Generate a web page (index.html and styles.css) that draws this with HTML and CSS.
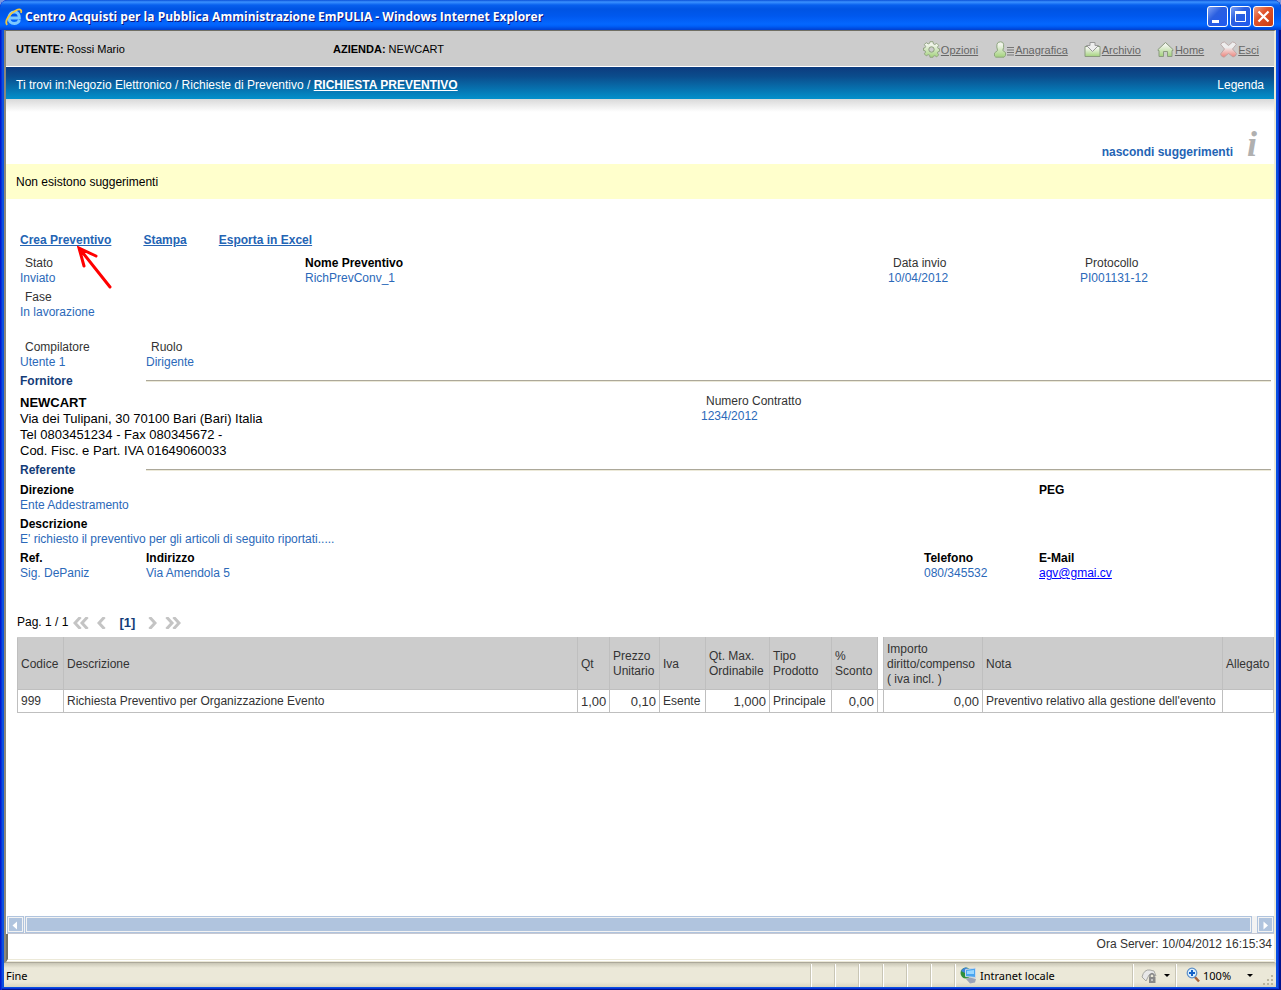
FILE: index.html
```html
<!DOCTYPE html>
<html lang="it">
<head>
<meta charset="utf-8">
<title>Centro Acquisti per la Pubblica Amministrazione EmPULIA</title>
<link rel="stylesheet" href="styles.css">
</head>
<body>
<div class="window">
  <header class="titlebar">
    <svg class="ie-logo" viewBox="0 0 18 18" aria-hidden="true">
      <path d="M14.500 12C13.500 14.500 11.500 15.500 9.300 15.500 6 15.500 3.900 13 3.900 9.900 3.900 6.600 6.200 4 9.400 4c3.200 0 5 2.400 4.900 5.900H5.500" fill="none" stroke="#7cc8ff" stroke-width="3"/>
      <path d="M2.200 16.800C-1 13.500 4.500 5.500 10.800 2.500 14.500.7 17.300 1.200 15.900 4.900" fill="none" stroke="#f3c63b" stroke-width="1.800"/>
    </svg>
    <h1 class="title">Centro Acquisti per la Pubblica Amministrazione EmPULIA - Windows Internet Explorer</h1>
    <div class="win-buttons">
      <button class="win-btn" type="button" aria-label="Riduci a icona"><svg viewBox="0 0 19 19"><path d="M4 13h7v3H4z" fill="#fff"/></svg></button>
      <button class="win-btn" type="button" aria-label="Ingrandisci"><svg viewBox="0 0 19 19"><path d="M4.500 5.500h10v9h-10z" fill="none" stroke="#fff"/><path d="M4 4h11v3H4z" fill="#fff"/></svg></button>
      <button class="win-btn win-close" type="button" aria-label="Chiudi"><svg viewBox="0 0 19 19"><path d="M4.500 4.500l10 10M14.500 4.500l-10 10" stroke="#fff" stroke-width="2.200"/></svg></button>
    </div>
  </header>

  <div class="viewport">
    <div class="userbar">
      <div class="user"><b>UTENTE:</b> Rossi Mario</div>
      <div class="company"><b>AZIENDA:</b> NEWCART</div>
      <nav class="menu">
        <a href="#opzioni"><svg class="ico" viewBox="0 0 17 17"><defs><linearGradient id="green" x1="0" y1="0" x2="0" y2="1"><stop offset=".2" stop-color="#f0f4ea"/><stop offset="1" stop-color="#a3d27c"/></linearGradient></defs><path d="M7 .7h3l.4 2.200 1.400.6L13.700 2.300l2 2-1.200 1.900.6 1.300 1.400.2v2.600l-1.500.4-.6 1.300 1.300 1.900-2 2-1.900-1.300-1.400.6L10 16.300H7l-.4-2.100-1.400-.6-1.900 1.300-2-2L2.600 11 2 9.700.5 9.500V7L2 6.800l.6-1.400-1.300-1.900 2-1.800 1.900 1.200 1.400-.6z" fill="url(#green)" stroke="#8fa07f" stroke-width=".9"/><circle cx="8.500" cy="8.500" r="2.700" fill="#ccc" stroke="#8fa07f"/></svg><span>Opzioni</span></a>
        <a href="#anagrafica"><svg class="ico ico-wide" viewBox="0 0 20 17"><path d="M3 3.200Q3.500.8 6.500.8 9.300.8 9.600 3.200V6.500L8.800 9.500l2.700 2v3l-1.500 1.700H1.800L.5 15V12L3.600 9.500 2.800 6z" fill="url(#green)" stroke="#8fa780"/><path d="M13 6.500h7M13 9h7M13 11.500h7M13 14h7" stroke="#777"/></svg><span>Anagrafica</span></a>
        <a href="#archivio"><svg class="ico" viewBox="0 0 17 17"><path d="M1 5.500h15v10H1z" fill="url(#green)" stroke="#8b9a80"/><path d="M6 1.500h5v3h3.500l-6 6-6-6H6z" fill="#eee" stroke="#999"/></svg><span>Archivio</span></a>
        <a href="#home"><svg class="ico" viewBox="0 0 17 17"><path d="M8.500 1.500l7.500 7v1h-1v6H10.500V10.500h-4v5H2v-6H1v-1z" fill="url(#green)" stroke="#8b9a80"/></svg><span>Home</span></a>
        <a href="#esci"><svg class="ico" viewBox="0 0 17 17"><defs><linearGradient id="red" x1="0" y1="0" x2="0" y2="1"><stop offset=".35" stop-color="#eee"/><stop offset="1" stop-color="#ee8078"/></linearGradient></defs><path d="M.8 3.500Q2 .8 4.500 1L8.500 4.500 12.500 1Q15 .8 16.200 3.500L12.500 8l4 4.500Q16 15.500 13 16L8.500 12.500 4 16.300Q1 15.800.5 13L4.500 8z" fill="url(#red)" stroke="#b5a09e" stroke-width=".8"/></svg><span>Esci</span></a>
      </nav>
    </div>

    <div class="crumbs">
      <div>Ti trovi in:Negozio Elettronico / Richieste di Preventivo / <a href="#richiesta">RICHIESTA PREVENTIVO</a></div>
      <a class="legend" href="#legenda">Legenda</a>
    </div>

    <div class="hints">
      <a href="#suggerimenti">nascondi suggerimenti</a>
      <span class="info" aria-hidden="true">i</span>
    </div>
    <p class="notice">Non esistono suggerimenti</p>

    <main class="doc">
      <div class="actions">
        <a href="#crea">Crea Preventivo<svg class="pointer" viewBox="0 0 36 45"><path d="M33 42L2 3M7 21L2 3l17 8" fill="none" stroke="#f00" stroke-width="3" stroke-linecap="round"/></svg></a>
        <a href="#stampa">Stampa</a>
        <a href="#excel">Esporta in Excel</a>
      </div>

      <dl class="row row-state">
        <div><dt>Stato</dt><dd>Inviato</dd></div>
        <div><dt class="strong">Nome Preventivo</dt><dd>RichPrevConv_1</dd></div>
        <div><dt>Data invio</dt><dd>10/04/2012</dd></div>
        <div><dt>Protocollo</dt><dd>PI001131-12</dd></div>
      </dl>
      <dl class="row row-phase">
        <div><dt>Fase</dt><dd>In lavorazione</dd></div>
      </dl>
      <dl class="row row-contact">
        <div><dt>Compilatore</dt><dd>Utente 1</dd></div>
        <div><dt>Ruolo</dt><dd>Dirigente</dd></div>
      </dl>

      <div class="section"><h2>Fornitore</h2><hr></div>
      <div class="supplier">
        <address><b>NEWCART</b><br>Via dei Tulipani, 30 70100 Bari (Bari) Italia<br>Tel 0803451234 - Fax 080345672 -<br>Cod. Fisc. e Part. IVA 01649060033</address>
        <dl class="contract"><dt>Numero Contratto</dt><dd>1234/2012</dd></dl>
      </div>

      <div class="section"><h2>Referente</h2><hr></div>
      <dl class="row row-contact row-first">
        <div class="span3"><dt class="strong">Direzione</dt><dd>Ente Addestramento</dd></div>
        <div><dt class="strong">PEG</dt></div>
      </dl>
      <dl class="row row-wide">
        <div><dt class="strong">Descrizione</dt><dd>E' richiesto il preventivo per gli articoli di seguito riportati.....</dd></div>
      </dl>
      <dl class="row row-contact">
        <div><dt class="strong">Ref.</dt><dd>Sig. DePaniz</dd></div>
        <div><dt class="strong">Indirizzo</dt><dd>Via Amendola 5</dd></div>
        <div><dt class="strong">Telefono</dt><dd>080/345532</dd></div>
        <div><dt class="strong">E-Mail</dt><dd><a class="mail" href="mailto:agv@gmai.cv">agv@gmai.cv</a></dd></div>
      </dl>
    </main>

    <nav class="pager" aria-label="Pagine">
      <span>Pag. 1 / 1</span>
      <svg class="chev" viewBox="0 0 16 12"><path d="M7.500 0L2 6l5.500 6M14.500 0L9 6l5.500 6"/></svg>
      <svg class="chev chev-one" viewBox="0 0 9 12"><path d="M7.500 0L2 6l5.500 6"/></svg>
      <b>[1]</b>
      <svg class="chev chev-one" viewBox="0 0 9 12"><path d="M1.500 0L7 6l-5.500 6"/></svg>
      <svg class="chev" viewBox="0 0 16 12"><path d="M1.500 0L7 6l-5.500 6M8.500 0L14 6l-5.500 6"/></svg>
    </nav>

    <div class="items-wrap">
    <table class="items">
      <colgroup><col class="w46"><col><col class="w32"><col class="w50"><col class="w46"><col class="w64"><col class="w62"><col class="w46"><col class="w6"><col class="w99"><col class="w240"><col class="w51"></colgroup>
      <thead>
        <tr><th>Codice</th><th>Descrizione</th><th>Qt</th><th>Prezzo<br>Unitario</th><th>Iva</th><th>Qt. Max.<br>Ordinabile</th><th>Tipo<br>Prodotto</th><th>%<br>Sconto</th><td class="gap"></td><th>Importo<br>diritto/compenso<br>( iva incl. )</th><th>Nota</th><th>Allegato</th></tr>
      </thead>
      <tbody>
        <tr><td>999</td><td>Richiesta Preventivo per Organizzazione Evento</td><td class="num">1,00</td><td class="num">0,10</td><td>Esente</td><td class="num">1,000</td><td>Principale</td><td class="num">0,00</td><td class="gap"></td><td class="num">0,00</td><td>Preventivo relativo alla gestione dell'evento</td><td></td></tr>
      </tbody>
    </table>
    </div>

    <div class="scrollbar">
      <button type="button" aria-label="Scorri a sinistra"><svg viewBox="0 0 14 14"><path d="M9 3.500v8L4.500 7.500z" fill="#fff"/></svg></button>
      <div class="thumb"></div>
      <button type="button" aria-label="Scorri a destra"><svg viewBox="0 0 14 14"><path d="M5.500 3.500v8L10 7.500z" fill="#fff"/></svg></button>
    </div>
    <div class="clock">Ora Server: 10/04/2012 16:15:34</div>
  </div>

  <footer class="status">
    <span class="state">Fine</span>
    <i class="cell"></i><i class="cell"></i><i class="cell"></i><i class="cell"></i><i class="cell"></i><i class="cell"></i>
    <div class="zone"><svg class="s-ico" viewBox="0 0 17 17"><circle cx="6" cy="6" r="5.500" fill="#2f8f3c"/><path d="M1 4Q4-1 8 1L5 6z" fill="#3c83d8"/><path d="M5.500 2.500l10-1.500v9.500l-10-1z" fill="#4aa5f0" stroke="#cfd8e6"/><path d="M7 4l7-1v4L7 7z" fill="#9ad7ff"/><path d="M6 12l4-1.500 6 1.500-1 3.500-5 1z" fill="#9ba3b8"/></svg>Intranet locale</div>
    <div class="lock"><svg class="s-ico" viewBox="0 0 17 17"><path d="M1 10Q3 2 9 3l4 1 2 5-4-2-3 1-3 6-2-2z" fill="#e8e8e8" stroke="#a7a7a2"/><path d="M9 10V8q2-3 4 0v2" fill="none" stroke="#888" stroke-width="1.500"/><path d="M8 10h6.500v6H8z" fill="#888"/><path d="M11 12v2" stroke="#fff"/></svg><i class="drop"></i></div>
    <button class="zoom" type="button"><svg class="s-ico" viewBox="0 0 17 17"><path d="M9 9l5 5.500" stroke="#a8643c" stroke-width="2.500"/><circle cx="7" cy="6" r="4.800" fill="#d9efff" stroke="#5d8fc8" stroke-width="1.200"/><path d="M7 3v6M4 6h6" stroke="#1462c8" stroke-width="2"/></svg><span>100%</span><i class="drop"></i></button>
    <svg class="grip" viewBox="0 0 12 12"><path d="M9 1h2v2H9zM5 5h2v2H5zM9 5h2v2H9zM1 9h2v2H1zM5 9h2v2H5zM9 9h2v2H9z" fill="#b9b5a0"/></svg>
  </footer>
</div>
</body>
</html>
```
FILE: styles.css
```css
* { box-sizing: border-box; }

body {
  margin: 0;
  background: #7b97e0;
  color: #333;
  font: 12px/15px "Liberation Sans", Arial, sans-serif;
}

h1, h2, p, dl, dd, hr { margin: 0; }
svg { display: block; flex: none; }
button { padding: 0; font: inherit; }

.window {
  display: flex;
  flex-direction: column;
  min-height: 100vh;
  padding: 0 5px 3px 4px;
  overflow: hidden;
  border-radius: 8px 8px 0 0;
  background: #0a50e0;
  box-shadow: inset 1px 0 #0019cf, inset 2px 0 #0831d9, inset -2px -1px #00138c, inset -3px -2px #0831d9;
}

/* Title bar */
.titlebar {
  display: flex;
  align-items: center;
  gap: 2px;
  height: 30px;
  margin: 0 -5px 0 -4px;
  padding: 3px 7px 0 5px;
  background: linear-gradient(#0a50d8 0, #3b92ff 2px, #0860ee 5px, #0054e3 9px, #0058ee 16px, #0467ff 24px, #0060fa 26px, #003fd0 30px);
}
.ie-logo { width: 18px; height: 18px; }
.title {
  flex: 1;
  color: #fff;
  font: bold 12px/18px "Open Sans", "Noto Sans", sans-serif;
  text-shadow: 1px 1px #0a1883;
  white-space: nowrap;
}
.win-buttons { display: flex; gap: 2px; }
.win-btn {
  width: 21px;
  height: 21px;
  border: 1px solid #fff;
  border-radius: 3px;
  background: linear-gradient(135deg, #7fa2f5, #2b5fe0 40%, #1f5af0);
}
.win-close { background: linear-gradient(135deg, #f0a184, #e0532c 40%, #cc3c10); }
.win-btn svg { width: 19px; height: 19px; }

/* Page area */
.viewport {
  display: flex;
  flex: 1;
  flex-direction: column;
  border: solid;
  border-width: 1px 2px 1px 2px;
  border-color: #716f64 #ece9d8 #aca899 #8a877b;
  background: #fff;
}

.userbar {
  display: flex;
  height: 36px;
  padding: 0 15px 0 10px;
  border-bottom: 1px solid #fff;
  background: #ccc;
  color: #000;
  font-size: 11px;
  line-height: 36px;
}
.user { flex: 0 0 317px; }
.menu { display: flex; gap: 16px; margin-left: auto; padding-top: 2px; }
.menu a {
  display: flex;
  align-items: center;
  gap: 1px;
  color: #666;
  line-height: 16px;
}
.ico { width: 17px; height: 17px; }
.ico-wide { width: 20px; }

.crumbs {
  display: flex;
  justify-content: space-between;
  align-items: center;
  height: 32px;
  padding: 4px 10px 0;
  background: linear-gradient(#0d3b7e, #0b4d8d 30%, #0390cb);
  color: #fff;
}
.crumbs a { color: #fff; font-weight: bold; }
.crumbs .legend { font-weight: normal; text-decoration: none; }

.hints {
  display: flex;
  justify-content: flex-end;
  align-items: flex-end;
  gap: 14px;
  height: 65px;
  padding: 0 17px 4px;
  background: linear-gradient(#d9d9d9, #fff 13px);
}
.hints a { color: #2464b4; font-weight: bold; text-decoration: none; }
.info {
  color: #b0b0b0;
  font: italic bold 36px/32px "Liberation Serif", serif;
}
.notice {
  padding: 11px 10px 9px;
  background: #ffc;
  color: #000;
}

/* Request details */
.doc { padding: 34px 3px 0 14px; }
.actions { display: flex; gap: 32px; margin-bottom: 8px; }
.actions a { position: relative; color: #2464b4; font-weight: bold; }
.pointer {
  position: absolute;
  top: 12px;
  left: 57px;
  width: 36px;
  height: 45px;
}

.row { display: grid; min-height: 30px; margin-bottom: 4px; }
.row-state { grid-template-columns: 285fr 583fr 192fr 191fr; }
.row-contact { grid-template-columns: 126px 778fr 115fr 232fr; }
.row-phase { margin-bottom: 20px; }
.row-first { margin-top: 5px; }
.span3 { grid-column: span 3; }
dt { padding-left: 5px; }
dt.strong { padding-left: 0; color: #000; font-weight: bold; }
dd { color: #2b69b9; }
.mail { color: #00f; }

.section { display: grid; grid-template-columns: 126px 1fr; align-items: center; }
.section h2 { color: #143c78; font-size: 12px; line-height: 15px; }
.section hr {
  height: 2px;
  margin-bottom: 2px;
  border: solid;
  border-width: 1px 0;
  border-color: #aca899 #ece9d8 #ece9d8;
}
.supplier {
  display: grid;
  grid-template-columns: 681fr 570fr;
  padding: 5px 0 4px;
}
.supplier address {
  padding-top: 1px;
  color: #000;
  font-size: 13px;
  font-style: normal;
  line-height: 16px;
}

/* Item list */
.pager {
  display: flex;
  align-items: center;
  margin: 30px 0 7px 11px;
  color: #000;
}
.pager b { margin: 0 10px; color: #143c78; font-size: 13px; }
.chev {
  width: 16px;
  height: 12px;
  margin: 0 5px;
  fill: none;
  stroke: #c4c4c4;
  stroke-width: 3;
}
.chev-one { width: 9px; margin: 0 3px; }

.items-wrap { padding-left: 11px; }
.items {
  width: 100%;
  border-collapse: collapse;
  table-layout: fixed;
}
.items th, .items td {
  height: 23px;
  padding: 3px 0 3px 3px;
  border: 1px solid #bfbfbf;
  text-align: left;
  font-weight: normal;
  white-space: nowrap;
}
.items th {
  height: 52px;
  padding: 3px 0 2px 3px;
  border-top-color: #ccc;
  background: #ccc;
}
.items .gap { padding: 0; border-top-color: #fff; }
.items .num { padding-right: 3px; font-size: 13px; text-align: right; }
.w6 { width: 6px; }
.w32 { width: 32px; }
.w46 { width: 46px; }
.w50 { width: 50px; }
.w51 { width: 51px; }
.w62 { width: 62px; }
.w64 { width: 64px; }
.w99 { width: 99px; }
.w240 { width: 240px; }

/* Bottom of the page area */
.scrollbar {
  display: flex;
  gap: 1px;
  height: 18px;
  margin: auto 0 0 1px;
  border-bottom: 1px solid #c6c8d2;
  background: #f3f3f3;
}
.scrollbar button, .thumb {
  border: 1px solid #b0c4de;
  background: #b0c4de;
  box-shadow: inset 0 0 0 1px #f3f3f3;
}
.scrollbar button { width: 17px; }
.scrollbar svg { width: 14px; height: 14px; }
.thumb { flex: 1; margin-right: 4px; }
.clock {
  height: 28px;
  padding: 3px 2px 0;
  border-bottom: 3px double #ece9d8;
  border-left: 2px solid #716f64;
  text-align: right;
}

/* Status bar */
.status {
  display: flex;
  align-items: stretch;
  height: 24px;
  padding-top: 1px;
  background: linear-gradient(#c9c6b5, #ebe8d8 5px, #ebe8d8 19px, #d9d5c0);
  color: #000;
  font: 11px/24px "Noto Sans", sans-serif;
}
.state { flex: 1; padding-left: 2px; }
.cell { width: 24px; }
.cell, .zone, .lock, .zoom { border: 0 solid #c9c6b5; border-left-width: 1px; box-shadow: inset 1px 0 #fff; }
.zone, .lock, .zoom { display: flex; align-items: center; gap: 3px; }
.zone { width: 178px; padding-left: 5px; }
.lock { width: 43px; padding-left: 8px; gap: 6px; }
.zoom { width: 87px; padding-left: 9px; gap: 1px; background: none; }
.s-ico { width: 17px; height: 17px; }
.drop {
  border: 3px solid transparent;
  border-top-color: #000;
  border-bottom: 0;
}
.zoom .drop { margin-left: 15px; }
.zoom span { width: 28px; }
.grip { width: 12px; height: 12px; margin: 10px 2px 0 0; }
```
